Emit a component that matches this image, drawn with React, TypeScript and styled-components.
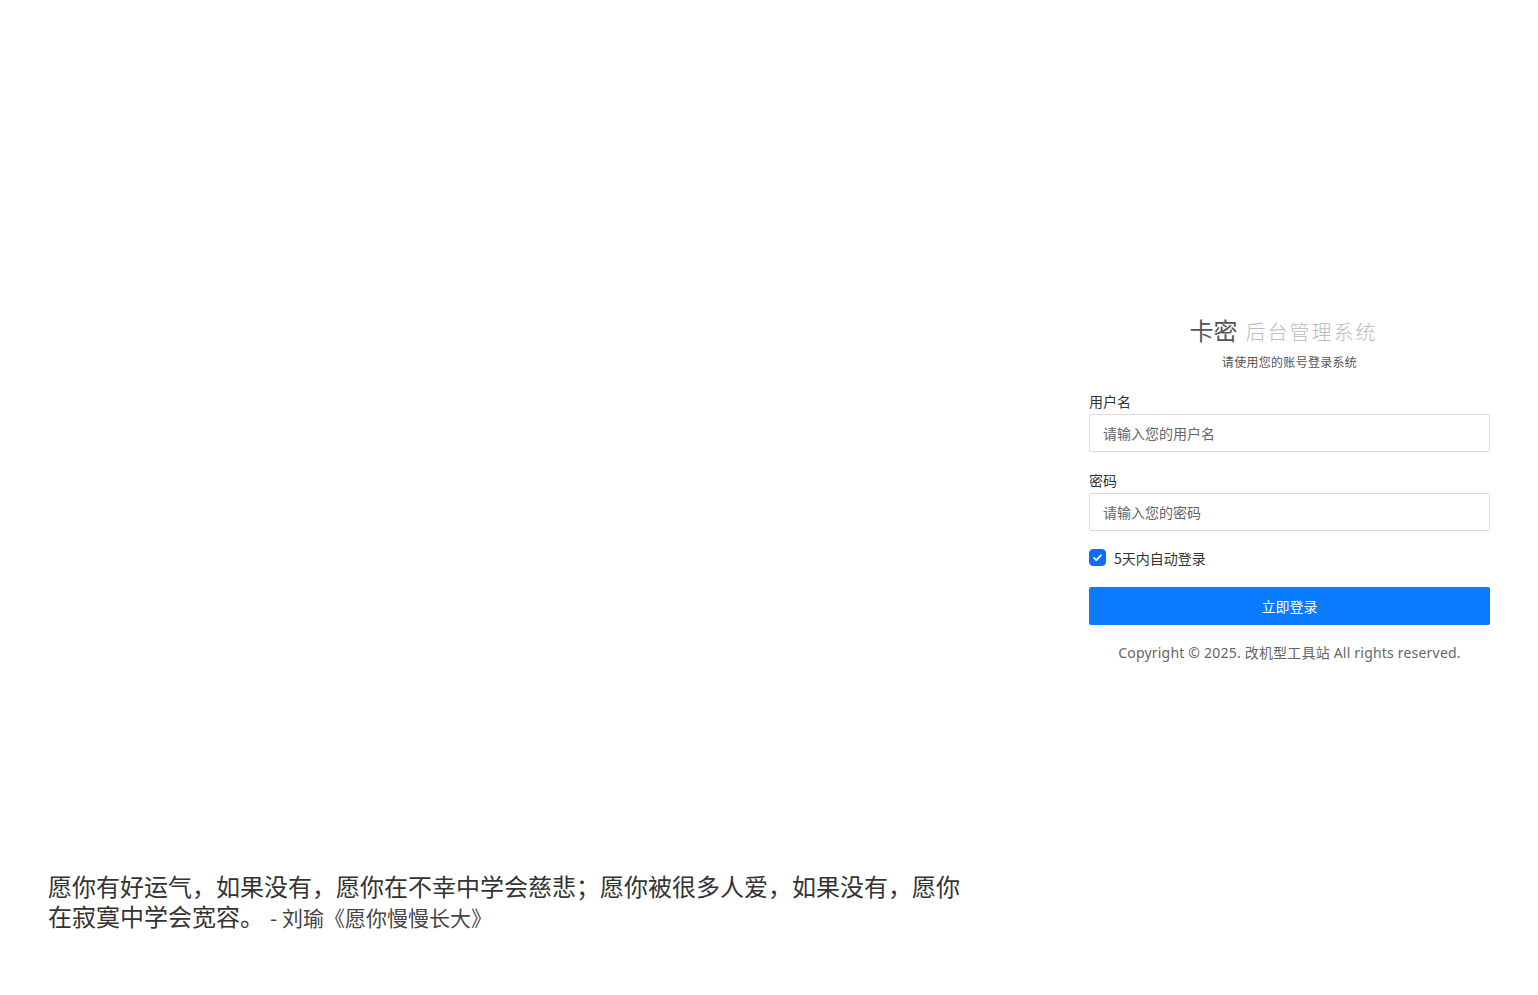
import React, { useState } from "react";
import styled, { createGlobalStyle } from "styled-components";

const GlobalStyle = createGlobalStyle`
  html, body {
    margin: 0;
    padding: 0;
    background: #fff;
    font-family: "Noto Sans", "Noto Sans CJK SC", sans-serif;
  }
  * { box-sizing: border-box; }
`;

const Page = styled.div`
  display: flex;
  height: 100vh;
  width: 100%;
`;

const Cover = styled.div`
  flex: 1;
  display: flex;
  flex-direction: column;
  justify-content: flex-end;
  padding: 0 48px 63px 48px;
`;

const Quote = styled.div`
  max-width: 930px;
  font-size: 24px;
  line-height: 30px;
  color: #333;
  font-family: "Noto Sans CJK SC", sans-serif;
`;

const Author = styled.span`
  font-size: 21px;
  color: #444;
  margin-left: 6px;
`;

const Side = styled.div`
  width: 497px;
  padding: 0 48px 18px 48px;
  display: flex;
  flex-direction: column;
  justify-content: center;
`;

const Title = styled.div`
  text-align: center;
  font-size: 24px;
  line-height: 30px;
  color: #555;
  font-family: "Noto Sans CJK SC", sans-serif;
`;

const TitleLight = styled.span`
  font-size: 20px;
  color: #bbb;
  letter-spacing: 2px;
  margin-left: 8px;
  padding-right: 12px;
  font-weight: 300;
`;

const Subtitle = styled.div`
  text-align: center;
  font-size: 12px;
  letter-spacing: 0.3px;
  line-height: 18px;
  color: #555;
  margin-top: 6px;
  font-family: "Noto Sans CJK SC", sans-serif;
`;

const Field = styled.div<{ $first?: boolean }>`
  margin-top: ${(p) => (p.$first ? "20px" : "18px")};
  display: flex;
  flex-direction: column;
`;

const Label = styled.label`
  font-size: 14px;
  line-height: 20px;
  color: #333;
  margin-bottom: 3px;
  font-family: "Noto Sans CJK SC", sans-serif;
`;

const Input = styled.input`
  height: 38px;
  width: 100%;
  border: 1px solid #dcdcdc;
  border-radius: 2px;
  padding: 0 13px;
  font-size: 14px;
  color: #333;
  outline: none;
  font-family: "Noto Sans CJK SC", sans-serif;
  &::placeholder {
    color: #666;
  }
`;

const CheckRow = styled.label`
  margin-top: 17px;
  display: flex;
  align-items: center;
  gap: 8px;
  height: 20px;
  font-size: 14px;
  color: #333;
  cursor: pointer;
  font-family: "Noto Sans CJK SC", sans-serif;
`;

const Box = styled.span<{ $on: boolean }>`
  width: 17px;
  height: 17px;
  border-radius: 4px;
  background: ${(p) => (p.$on ? "#0d6efd" : "#fff")};
  border: 1px solid ${(p) => (p.$on ? "#0d6efd" : "#bbb")};
  display: flex;
  align-items: center;
  justify-content: center;
`;

const Button = styled.button`
  margin-top: 19px;
  height: 38px;
  width: 100%;
  border: none;
  border-radius: 2px;
  background: #0a7bff;
  color: #fff;
  font-size: 14px;
  cursor: pointer;
  font-family: "Noto Sans CJK SC", sans-serif;
`;

const Copyright = styled.div`
  margin-top: 18px;
  text-align: center;
  font-size: 14px;
  letter-spacing: 0.2px;
  line-height: 20px;
  color: #666;
  font-family: "Noto Sans", "Noto Sans CJK SC", sans-serif;
`;

export default function App() {
  const [remember, setRemember] = useState(true);
  return (
    <>
      <GlobalStyle />
      <Page>
        <Cover>
          <Quote>
            愿你有好运气，如果没有，愿你在不幸中学会慈悲；愿你被很多人爱，如果没有，愿你在寂寞中学会宽容。
            <Author>- 刘瑜《愿你慢慢长大》</Author>
          </Quote>
        </Cover>
        <Side>
          <Title>
            卡密<TitleLight>后台管理系统</TitleLight>
          </Title>
          <Subtitle>请使用您的账号登录系统</Subtitle>
          <Field $first>
            <Label>用户名</Label>
            <Input placeholder="请输入您的用户名" />
          </Field>
          <Field>
            <Label>密码</Label>
            <Input type="password" placeholder="请输入您的密码" />
          </Field>
          <CheckRow onClick={() => setRemember(!remember)}>
            <Box $on={remember}>
              {remember && (
                <svg width="11" height="11" viewBox="0 0 16 16">
                  <path
                    d="M3 8.5l3.2 3.2L13 5"
                    fill="none"
                    stroke="#fff"
                    strokeWidth="2.6"
                    strokeLinecap="round"
                    strokeLinejoin="round"
                  />
                </svg>
              )}
            </Box>
            5天内自动登录
          </CheckRow>
          <Button>立即登录</Button>
          <Copyright>Copyright © 2025. 改机型工具站 All rights reserved.</Copyright>
        </Side>
      </Page>
    </>
  );
}
